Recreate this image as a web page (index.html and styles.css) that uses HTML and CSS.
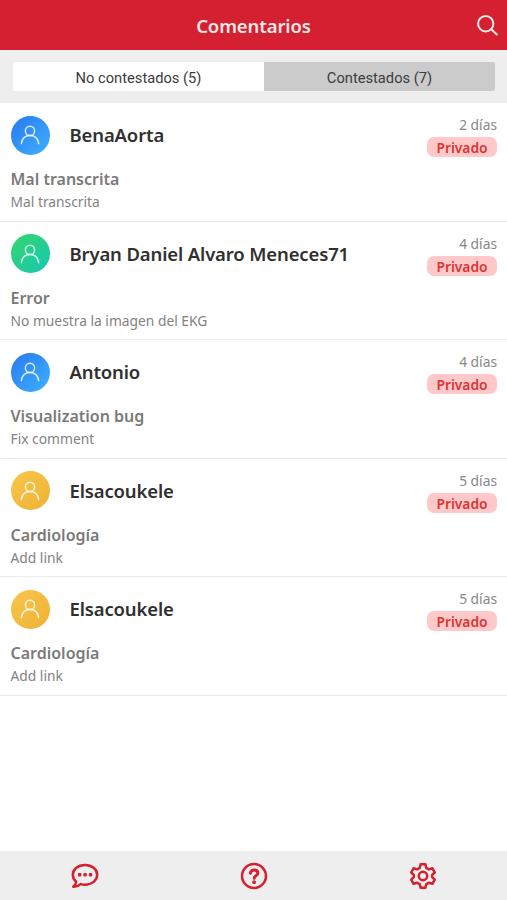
FILE: index.html
```html
<!DOCTYPE html>
<html lang="es">
<head>
<meta charset="utf-8">
<meta name="viewport" content="width=device-width, initial-scale=1">
<title>Comentarios</title>
<link rel="stylesheet" href="styles.css">
</head>
<body>
<svg class="defs" aria-hidden="true">
  <symbol id="person" viewBox="0 0 20 20">
    <circle cx="10" cy="5.9" r="4.6"/>
    <path d="M1.300 18.700C2 13.500 5.300 10.500 10 10.500s8 3 8.700 8.200"/>
  </symbol>
</svg>
<header class="bar">
  <h1>Comentarios</h1>
  <svg class="search" viewBox="0 0 20 20"><circle cx="8.3" cy="8.3" r="7.3"/><path d="M13.6 13.6l5.300 5"/></svg>
</header>
<nav class="tabs">
  <button class="tab active">No contestados (5)</button>
  <button class="tab">Contestados (7)</button>
</nav>
<main class="list">
  <article class="item">
    <div class="head">
      <span class="avatar blue"><svg><use href="#person"/></svg></span>
      <h2>BenaAorta</h2>
      <div class="meta"><time>2 días</time><span class="badge">Privado</span></div>
    </div>
    <h3>Mal transcrita</h3>
    <p>Mal transcrita</p>
  </article>
  <article class="item">
    <div class="head">
      <span class="avatar green"><svg><use href="#person"/></svg></span>
      <h2>Bryan Daniel Alvaro Meneces71</h2>
      <div class="meta"><time>4 días</time><span class="badge">Privado</span></div>
    </div>
    <h3>Error</h3>
    <p>No muestra la imagen del EKG</p>
  </article>
  <article class="item">
    <div class="head">
      <span class="avatar blue"><svg><use href="#person"/></svg></span>
      <h2>Antonio</h2>
      <div class="meta"><time>4 días</time><span class="badge">Privado</span></div>
    </div>
    <h3>Visualization bug</h3>
    <p>Fix comment</p>
  </article>
  <article class="item">
    <div class="head">
      <span class="avatar yellow"><svg><use href="#person"/></svg></span>
      <h2>Elsacoukele</h2>
      <div class="meta"><time>5 días</time><span class="badge">Privado</span></div>
    </div>
    <h3>Cardiología</h3>
    <p>Add link</p>
  </article>
  <article class="item">
    <div class="head">
      <span class="avatar yellow"><svg><use href="#person"/></svg></span>
      <h2>Elsacoukele</h2>
      <div class="meta"><time>5 días</time><span class="badge">Privado</span></div>
    </div>
    <h3>Cardiología</h3>
    <p>Add link</p>
  </article>
</main>
<footer class="nav">
  <a><svg viewBox="0 0 28 28"><path d="M14 3C7.1 3 1.8 7.2 1.8 12.8c0 2.9 1.3 5.3 3.4 7-.2 2-1.3 3.6-3 4.900 3 .2 5.600-.8 7.400-2.600 1.400.4 2.900.6 4.400.6 6.900 0 12.200-4.300 12.200-9.900S20.900 3 14 3z"/><g class="solid"><rect x="7" y="11" width="3.400" height="3.400" rx="1"/><rect x="12.400" y="11" width="3.400" height="3.400" rx="1"/><rect x="17.800" y="11" width="3.400" height="3.400" rx="1"/></g></svg></a>
  <a><svg viewBox="0 0 28 28"><circle cx="14" cy="14" r="12"/><path class="thick" d="M10.400 11.200c.4-2.300 1.800-3.300 3.800-3.300 2.200 0 3.700 1.200 3.700 3.100 0 2.900-3.700 2.700-3.700 5.300"/><circle class="solid" cx="14.100" cy="20.200" r="1.900"/></svg></a>
  <a><svg viewBox="0 0 28 28"><circle cx="14" cy="14" r="4.200"/><path d="M11.600 2.300h4.800l.8 3.500 2.700 1.600 3.500-1.100 2.400 4.200-2.600 2.400v2.300l2.600 2.400-2.400 4.200-3.500-1.100-2.700 1.600-.8 3.500h-4.800l-.8-3.500-2.700-1.600-3.500 1.100-2.400-4.200 2.600-2.400v-2.300l-2.600-2.400 2.400-4.200 3.500 1.100 2.700-1.600z"/></svg></a>
</footer>
</body>
</html>
```
FILE: styles.css
```css
* { box-sizing: border-box; }
body {
  margin: 0;
  height: 100vh;
  display: flex;
  flex-direction: column;
  background: #fff;
  font-family: "Noto Sans", sans-serif;
}
h1, h2, h3, p { margin: 0; }
.defs { display: none; }
.bar {
  height: 50px;
  flex: none;
  display: grid;
  grid-template-columns: 1fr auto 1fr;
  align-items: center;
  padding: 0 9px;
  background: #d42030;
  color: #fbe6e8;
}
.bar h1 { grid-column: 2; font-size: 18.5px; line-height: 26px; font-weight: 560; letter-spacing: -.1px; padding-top: 1px; }
.search {
  justify-self: end;
  width: 21px;
  height: 21px;
  fill: none;
  stroke: #fbe6e8;
  stroke-width: 1.9;
  stroke-linecap: round;
}
.tabs { height: 53px; flex: none; display: flex; padding: 12px 12px 12px 13px; background: #eee; }
.tab {
  flex: 0 0 231px;
  border: 0;
  padding: 2px 0 0;
  background: #cbcbcb;
  color: #3c3c3c;
  font: 14.7px Roboto, sans-serif;
  border-radius: 0 2px 2px 0;
}
.tab.active { flex: 1; background: #fff; border-radius: 2px 0 0 2px; }
.list { flex: 1; }
.item { height: 118.5px; padding: 12px 10px 0 10.5px; border-bottom: 1px solid #ebebeb; }
.head { display: flex; height: 51px; align-items: flex-start; }
.avatar {
  width: 39px;
  height: 39px;
  margin-top: .5px;
  border-radius: 50%;
  display: grid;
  place-items: center;
}
.avatar svg { width: 20px; height: 20px; fill: none; stroke: #fff; stroke-opacity: .8; stroke-width: 1.5; stroke-linecap: round; }
.blue { background: linear-gradient(135deg, #2878f0, #3eb2ff); }
.green { background: linear-gradient(135deg, #38d66b, #12c7b4); }
.yellow { background: linear-gradient(135deg, #f7c64c, #efb234); }
h2 { flex: 1; margin-left: 20px; font-size: 18.5px; line-height: 40px; font-weight: 560; letter-spacing: -.14px; color: #303030; white-space: nowrap; }
.meta { display: flex; flex-direction: column; align-items: flex-end; }
time { font-size: 13.8px; line-height: 19px; color: #888; }
.badge {
  width: 70px;
  height: 20px;
  margin-top: 3px;
  border-radius: 7px;
  background: #ffc9c9;
  color: #dc3434;
  font-size: 13.800px;
  line-height: 21px;
  font-weight: 600;
  text-align: center;
}
h3 { font-size: 16px; line-height: 26px; font-weight: 560; color: #7a7a7a; }
p { font-size: 13.800px; line-height: 20px; color: #828282; }
.nav { height: 49px; flex: none; display: grid; grid-template-columns: repeat(3, 1fr); background: #eee; }
.nav a { display: grid; place-items: center; }
.nav svg { width: 28px; height: 28px; fill: none; stroke: #d42030; stroke-width: 2.5; stroke-linejoin: round; stroke-linecap: round; }
.nav .solid { fill: #d42030; stroke: none; }
.nav .thick { stroke-width: 3; }
```
